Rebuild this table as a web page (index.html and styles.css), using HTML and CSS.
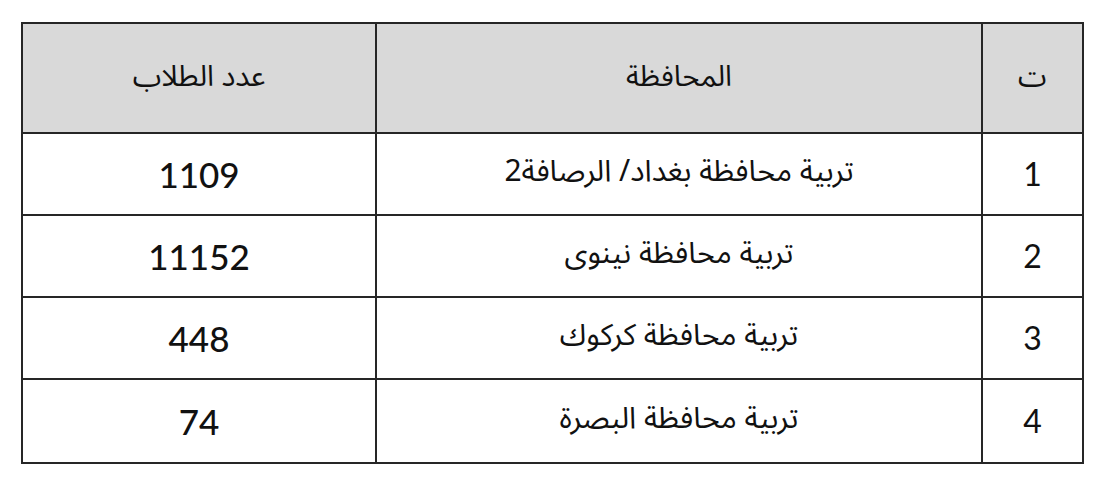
FILE: index.html
```html
<!DOCTYPE html>
<html lang="ar" dir="rtl">
<head>
<meta charset="utf-8">
<title>جدول</title>
<link rel="stylesheet" href="styles.css">
</head>
<body>
<div class="page">
<table class="grid">
  <colgroup>
    <col class="c-idx">
    <col class="c-gov">
    <col class="c-num">
  </colgroup>
  <thead>
    <tr>
      <th class="ar">ت</th>
      <th class="ar">المحافظة</th>
      <th class="ar">عدد الطلاب</th>
    </tr>
  </thead>
  <tbody>
    <tr><td class="idx">1</td><td class="ar body">تربية محافظة بغداد/ الرصافة2</td><td class="num">1109</td></tr>
    <tr><td class="idx">2</td><td class="ar body">تربية محافظة نينوى</td><td class="num">11152</td></tr>
    <tr><td class="idx">3</td><td class="ar body">تربية محافظة كركوك</td><td class="num">448</td></tr>
    <tr class="last"><td class="idx">4</td><td class="ar body">تربية محافظة البصرة</td><td class="num">74</td></tr>
  </tbody>
</table>
</div>
</body>
</html>
```
FILE: styles.css
```css
html, body {
  margin: 0;
  padding: 0;
  background: #ffffff;
}
.page {
  padding: 22px 16px 0 23px;
}
.grid {
  width: 1061px;
  border-collapse: collapse;
  table-layout: fixed;
  color: #111;
}
.c-idx { width: 101px; }
.c-gov { width: 606px; }
.c-num { width: 354px; }
.grid th, .grid td {
  border: 2px solid #262626;
  text-align: center;
  vertical-align: middle;
  padding: 0;
  line-height: 40px;
}
.grid thead th {
  background: #d9d9d9;
  height: 106px;
  font-weight: normal;
  padding-bottom: 2px;
}
.grid tbody td {
  height: 76px;
}
.grid tbody td.body {
  padding-bottom: 4px;
}
.grid tbody tr.last td {
  height: 78px;
}
.ar {
  font-family: "Noto Sans Arabic", "DejaVu Sans", sans-serif;
  font-size: 29px;
}
.ar.body {
  font-size: 30px;
}
.num {
  font-family: Lato, "Open Sans", sans-serif;
  font-size: 35px;
  font-weight: 500;
}
.idx {
  font-family: Lato, "Open Sans", sans-serif;
  font-size: 32px;
}
```
